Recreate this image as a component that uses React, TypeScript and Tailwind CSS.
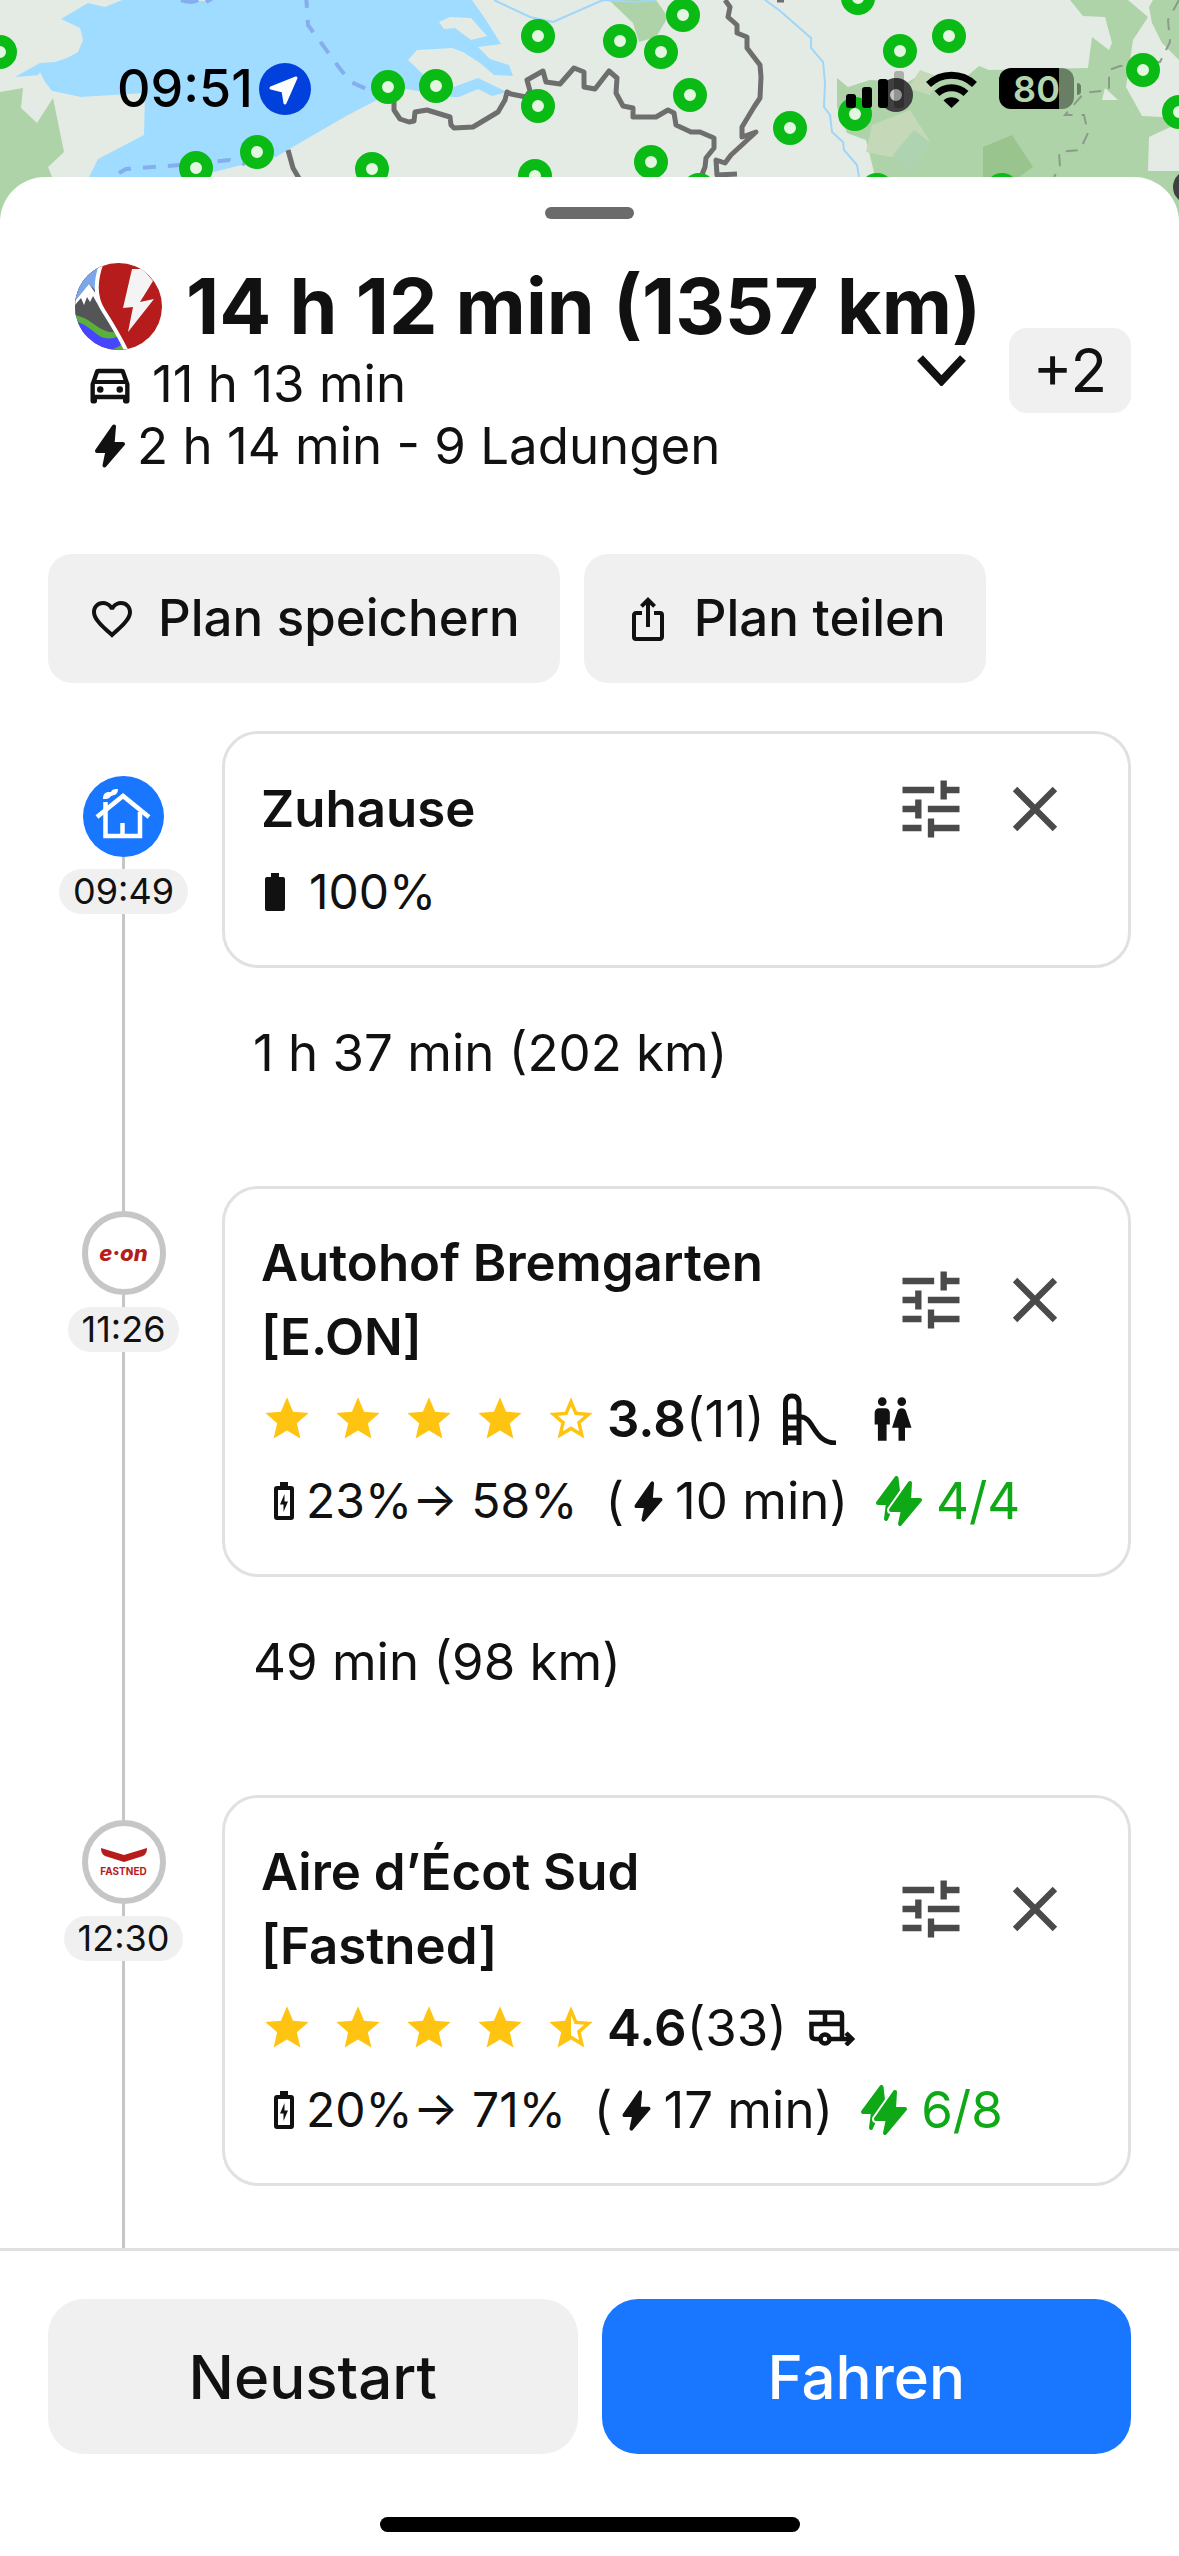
import React from "react";
import {
  MdClose,
  MdFavoriteBorder,
  MdOutlineDirectionsCar,
  MdOutlineIosShare,
  MdStar,
  MdStarBorder,
  MdStarHalf,
  MdTune,
  MdWc,
} from "react-icons/md";

const chargers = [
  [0, 52], [538, 36], [388, 87], [436, 86], [538, 106], [257, 152], [196, 168],
  [372, 169], [535, 176], [620, 41], [683, 15], [661, 52], [690, 95], [858, -2],
  [949, 36], [900, 51], [790, 128], [855, 114], [651, 162], [699, 190],
  [877, 190], [1002, 190], [1143, 70], [1179, 112],
];

const MapBackground = () => (
  <svg
    className="absolute inset-x-0 top-0 h-60 w-full"
    viewBox="0 0 1179 240"
    preserveAspectRatio="xMidYMin slice"
    aria-hidden="true"
  >
    <rect width="1179" height="240" fill="#e4ebe4" />
    {/* Water */}
    <path
      fill="#a0dcff"
      d="M122 0 105 7 88 3 61 19 80 28 83 40 78 52 67 58 55 62 40 63 31 68 15 77 40 75 52 91 80 97 145 93 144 135 98 159 89 177H195L214 172 245 164 276 157 291 148 348 115 377 100 406 89 452 97H459L478 89 492 96 507 92 478 78 454 87 429 80 408 60 417 50 452 48 463 52 480 63 494 75 513 76 509 65 490 59 478 47 501 44 486 20 472 0Z"
    />
    <path
      fill="#e4ebe4"
      d="M439 22 450 17 471 18 487 36 471 40 455 28 444 29ZM40 72 48 89 52 91 80 97 60 98 30 90Z"
    />
    <path fill="#e4ebe4" d="M181 0H212L205 1Z" />
    {/* Woods */}
    <g fill="#aed3a8">
      <path d="M0 92 23 88 21 108 37 123 53 98 64 152 48 167 52 177 60 240H0Z" />
      <path d="M609 0 633 23 639 42 656 37 668 17 656 0Z" />
      <path d="M837 78 848 87 870 80 908 82 920 75 939 77 966 77 979 66 989 70 1088 68 1092 37 1109 50 1112 43 1105 17 1083 16 1070 0H1128L1148 17 1133 40 1126 87 1142 116 1162 117 1179 123 1149 137 1148 171H1179V240H874V172L866 140 847 133 837 107Z" />
      <path d="M1149 7 1153 0H1179V60L1162 43 1152 23Z" />
    </g>
    <path
      fill="#c5d9b8"
      d="M910 110 931 143 891 157 866 152 872 125ZM920 70 939 77 930 95 908 88Z"
    />
    <path fill="#aed3b0" d="M914 130 931 143 912 175 893 155Z" />
    <path fill="#9ac48d" d="M983 147 1012 135 1033 167 1019 177H983Z" />
    <path fill="#e4ebe4" d="M1105 88 1118 100 1102 100Z" />
    {/* Rivers */}
    <g fill="none" stroke="#a0d6f8" strokeWidth="2">
      <path d="M765 0 779 10 811 38V48L823 62 825 83 824 107 830 115 832 132 843 142 844 150 857 165 859 177" />
      <path d="M494 0 530 17 553 22 603 0 637 2 656 0" />
    </g>
    {/* Ferry lines */}
    <g fill="none" stroke="#85aeee" strokeWidth="4">
      <path strokeDasharray="14 12" d="M306 -6 308 25 341 70 351 82 373 92" />
      <path strokeDasharray="13 12" d="M119 173 126 169 180 165 230 160 245 164" />
      <path d="M181 0Q193 4 198 0M206 2 213 -2" />
    </g>
    {/* Borders */}
    <path
      fill="none"
      stroke="#8c9a8a"
      strokeWidth="2"
      strokeDasharray="12 9"
      d="M1179 0 1168 20 1170 42 1160 62 1120 66 1109 70V90L1084 93 1065 115H1084L1088 133 1080 150 1059 152 1060 167 1054 177"
    />
    <g fill="none" stroke="#6e6e6e" strokeWidth="5" strokeLinejoin="round">
      <path d="M394 100V110L400 119 409 122 414 121 415 112 427 110 450 117 451 125 454 128 473 127 498 112 505 100 507 92 511 94 526 97 530 91 527 80 543 71 546 82 560 84 574 68 584 72 584 87 595 89 609 71 617 78 616 93 623 106 633 108V117H656L668 110 674 113 676 125 691 132 700 132 714 138V148L706 158 705 167 701 177" />
      <path d="M725 0 730 7 728 17 737 25 737 33 747 37V48L760 65 761 77 760 98 754 107 742 127V137L756 132 731 155 725 163 716 160 717 175 737 174" />
      <path d="M288 150 293 168 300 180M777 0H784" />
    </g>
    {/* Charging stations */}
    {chargers.map(([x, y]) => (
      <circle
        key={`${x}-${y}`}
        cx={x}
        cy={y}
        r="11.5"
        fill="#e2f6e0"
        stroke="#0bbb15"
        strokeWidth="11"
      />
    ))}
    <circle cx="896" cy="95" r="11.5" fill="#c4c4c4" stroke="#404040" strokeWidth="11" />
    <circle cx="1190" cy="187" r="11.5" fill="#c4c4c4" stroke="#404040" strokeWidth="11" />
  </svg>
);

const StatusBar = () => (
  <div className="relative flex h-[177px] items-center pl-[117px] pr-[98px]">
    <span className="text-[52px] leading-none font-medium text-black">09:51</span>
    <svg className="ml-1.5 size-[52px]" viewBox="0 0 52 52" aria-hidden="true">
      <circle cx="26" cy="26" r="26" fill="#0040dd" />
      <path
        d="M12 25 37 15 26 40 24 28Z"
        fill="#fff"
        stroke="#fff"
        strokeWidth="3"
        strokeLinejoin="round"
      />
    </svg>
    <div className="ml-auto flex items-center gap-[22px]">
      <svg className="h-[38px] w-[58px]" viewBox="0 0 58 38" aria-hidden="true">
        <rect y="24" width="10" height="14" rx="3" />
        <rect x="16" y="17" width="10" height="21" rx="3" />
        <rect x="32" y="9" width="10" height="29" rx="3" />
        <rect x="48" y="1" width="10" height="37" rx="3" opacity="0.25" />
      </svg>
      <svg className="h-[38px] w-[51px]" viewBox="0 0 51 38" aria-hidden="true">
        <g fill="none" stroke="#000" strokeWidth="7">
          <path d="M2.500 14.500A33 33 0 0 1 48.500 14.500" />
          <path d="M11 23.500A21 21 0 0 1 40 23.500" />
        </g>
        <path d="M17.500 30.500A11.500 11.500 0 0 1 33.500 30.500L25.500 38Z" />
      </svg>
      <div className="flex items-center gap-[3px]">
        <div className="flex h-[41px] w-[75px] items-center justify-center rounded-xl bg-linear-to-r from-black from-80% to-black/40 to-80%">
          <span className="text-[36px] leading-none font-semibold text-[#b4d6ae]">80</span>
        </div>
        <div className="h-3 w-1 rounded-r-full bg-black/40" />
      </div>
    </div>
  </div>
);

const AppLogo = () => (
  <svg className="size-[87px] shrink-0" viewBox="0 0 87 87" aria-hidden="true">
    <clipPath id="logo">
      <circle cx="43.500" cy="43.500" r="43.500" />
    </clipPath>
    <g clipPath="url(#logo)">
      <rect width="87" height="87" fill="#b71c1c" />
      <path d="M0 0H28Q16 30 30 50L52 87H0Z" fill="#4646ff" />
      <path d="M0 0H28Q16 30 30 50L44 73Q30 80 18 68 8 60 0 58Z" fill="#5bb03c" />
      <path d="M0 0H28Q16 30 30 46L44 69Q32 71 20 62 10 54 0 52Z" fill="#545557" />
      <path d="M0 0H28Q20 18 23 30L14 21 0 38Z" fill="#7aa7ec" />
      <path d="M0 38 14 21 21 31 23 42 18 33 15 39 12 34 9 42 6 35 0 42Z" fill="#fff" />
      <path d="M33 87Q42 86 48 80L53 87Z" fill="#5bb03c" />
      <path d="M27 -1Q16 28 28 47 44 72 52 89" fill="none" stroke="#fff" strokeWidth="4" />
      <path d="M57 6H68L78 18 65 39 79 36 53 69 58 44 48 45Z" fill="#f4f4f4" />
    </g>
  </svg>
);

const Bolt = ({ className }: { className: string }) => (
  <svg className={className} viewBox="0 0 30 44" aria-hidden="true">
    <path
      d="M19 2.500 17.500 20H28L9.500 41.500 12.500 27H2Z"
      fill="currentColor"
      stroke="currentColor"
      strokeWidth="4"
      strokeLinejoin="round"
    />
  </svg>
);

const DoubleBolt = () => (
  <svg className="h-[50px] w-[46px] shrink-0" viewBox="0 0 46 50" aria-hidden="true">
    <g strokeLinejoin="round" fill="#0fa816">
      <path d="M20.500 2 22 15 10 43 12 27H2Z" stroke="#0fa816" strokeWidth="4" />
      <path d="M34 7 33 24H44L24 48 27 34H15Z" stroke="#fff" strokeWidth="8" />
      <path d="M34 7 33 24H44L24 48 27 34H15Z" stroke="#0fa816" strokeWidth="4" />
    </g>
  </svg>
);

const BatteryFull = () => (
  <svg className="ml-1 h-[38px] w-5" viewBox="0 0 20 38" aria-hidden="true">
    <path d="M6 0H14V4H18Q20 4 20 6V36Q20 38 18 38H2Q0 38 0 36V6Q0 4 2 4H6Z" fill="#111" />
  </svg>
);

const BatteryCharging = () => (
  <svg className="h-[38px] w-5 shrink-0" viewBox="0 0 20 38" aria-hidden="true">
    <path d="M6 0H14V5H6Z" fill="#111" />
    <rect x="2" y="6" width="16" height="30" rx="1" fill="none" stroke="#111" strokeWidth="4" />
    <path d="M10.500 12V19.500H14L9.500 30V22.500H6Z" fill="#111" />
  </svg>
);

const HomeBadge = () => (
  <svg className="size-[81px]" viewBox="0 0 81 81" aria-hidden="true">
    <circle cx="40.500" cy="40.500" r="40.500" fill="#1976ff" />
    <g fill="none" stroke="#fff" strokeWidth="4.500">
      <path d="M14 41 40 20 66 41" />
      <path d="M22.500 36V60H57V36M22.500 26V37M39.500 60V47" />
    </g>
    <path d="M20 23C20 16 24 16 28 16 29 13 32 13 35 13 35 19 31 19 28 20 26 23 24 23 20 23Z" fill="#fff" />
  </svg>
);

const EonBadge = () => (
  <div className="flex size-[84px] items-center justify-center rounded-full border-6 border-[#c6c6c6] bg-white">
    <span className="text-[22px] leading-none font-extrabold text-[#b71c1c] italic">e·on</span>
  </div>
);

const FastnedBadge = () => (
  <div className="flex size-[84px] flex-col items-center justify-center gap-1 rounded-full border-6 border-[#c6c6c6] bg-white">
    <svg className="h-3.5 w-[46px]" viewBox="0 0 46 14" aria-hidden="true">
      <path d="M0 0 23 7 46 0Q46 6 42 8L23 14 4 8Q0 6 0 0Z" fill="#b71c1c" />
    </svg>
    <span className="text-[10px] leading-none font-bold text-[#b71c1c]">FASTNED</span>
  </div>
);

const Slide = () => (
  <svg className="h-[52px] w-[53px]" viewBox="0 0 53 52" aria-hidden="true">
    <g fill="none" stroke="#111" strokeWidth="5">
      <path d="M2.500 52V10Q2.500 3 9 3T16 10V52" />
      <path d="M3 24H18C31 24 30 50 53 50M3 35H16M3 45H16" />
    </g>
  </svg>
);

const Caravan = () => (
  <svg className="h-9 w-[46px]" viewBox="0 0 46 36" aria-hidden="true">
    <g fill="none" stroke="#111" strokeWidth="4.500">
      <path d="M0 2.500H30Q33 2.500 33 5V28M16 2V13M33 14H2.500V25Q2.500 29 6 29H11M21 29H42" />
      <circle cx="16" cy="29" r="4.500" />
      <path d="M37 23 43 29 37 35" />
    </g>
  </svg>
);

const stops = [
  { name: "Zuhause", time: "09:49", badge: <HomeBadge />, battery: "100%", leg: "1 h 37 min (202 km)" },
  {
    name: "Autohof Bremgarten [E.ON]",
    time: "11:26",
    badge: <EonBadge />,
    rating: "3.8",
    reviews: "(11)",
    lastStar: MdStarBorder,
    amenities: (
      <div className="ml-[18px] flex items-center gap-[30px]">
        <Slide />
        <MdWc className="size-[52px]" />
      </div>
    ),
    from: "23%",
    to: "58%",
    duration: "10 min)",
    free: "4/4",
    leg: "49 min (98 km)",
  },
  {
    name: "Aire d’Écot Sud [Fastned]",
    time: "12:30",
    badge: <FastnedBadge />,
    rating: "4.6",
    reviews: "(33)",
    lastStar: MdStarHalf,
    amenities: (
      <div className="ml-[22px]">
        <Caravan />
      </div>
    ),
    from: "20%",
    to: "71%",
    duration: "17 min)",
    free: "6/8",
    leg: "",
  },
];

const Stop = ({ stop, first }: { stop: (typeof stops)[number]; first: boolean }) => (
  <li className="flex shrink-0">
    {/* Time rail */}
    <div className="mr-[23px] flex w-[151px] shrink-0 flex-col items-center">
      {first ? <div className="h-[45px]" /> : <div className="h-[25px] w-[3px] bg-[#c6c6c6]" />}
      {stop.badge}
      <div className="h-3 w-[3px] bg-[#c6c6c6]" />
      <time className="rounded-full bg-[#f0f0f0] px-3.5 text-[36px] leading-[45px]">{stop.time}</time>
      <div className="w-[3px] flex-1 bg-[#c6c6c6]" />
    </div>
    {/* Stop card */}
    <div className="min-w-0 flex-1">
      <article className="flex flex-col gap-2 rounded-[36px] border-3 border-[#e1e1e1] pt-[37px] pr-[55px] pb-9 pl-9">
        <div className="flex items-center">
          <h2 className="max-w-[530px] flex-1 text-[51px] leading-[74px] font-semibold">{stop.name}</h2>
          <div className="ml-auto flex gap-7 text-[#4a4a4a]">
            <button type="button" aria-label="Optionen">
              <MdTune className="size-[76px]" />
            </button>
            <button type="button" aria-label="Entfernen">
              <MdClose className="size-[76px]" />
            </button>
          </div>
        </div>
        {stop.battery && (
          <div className="flex items-center gap-6 text-[48px] leading-[74px]">
            <BatteryFull />
            <span>{stop.battery}</span>
          </div>
        )}
        {stop.lastStar && (
          <div className="flex items-center text-[51px] leading-[74px] whitespace-nowrap">
            <div className="flex gap-[19px] text-[#ffc412]">
              <MdStar className="size-[52px]" />
              <MdStar className="size-[52px]" />
              <MdStar className="size-[52px]" />
              <MdStar className="size-[52px]" />
              <stop.lastStar className="size-[52px]" />
            </div>
            <b className="ml-2.5 font-semibold">{stop.rating}</b>
            <span>{stop.reviews}</span>
            {stop.amenities}
          </div>
        )}
        {stop.free && (
          <div className="flex items-center pl-[13px] text-[51px] leading-[74px] whitespace-nowrap">
            <BatteryCharging />
            <span className="ml-3 text-[48px]">{stop.from}→ {stop.to}</span>
            <span className="ml-7">(</span>
            <Bolt className="ml-2.5 h-[41px] w-[29px]" />
            <span className="ml-3">{stop.duration}</span>
            <div className="ml-7 flex items-center gap-3.5 text-[#0fa816]">
              <DoubleBolt />
              <span>{stop.free}</span>
            </div>
          </div>
        )}
      </article>
      <p className="h-[218px] pt-12 pl-[31px] text-[51px] leading-[74px]">{stop.leg}</p>
    </div>
  </li>
);

const App = () => {
  return (
    <main className="relative flex h-screen flex-col overflow-hidden bg-white font-['Inter',sans-serif] text-[#111]">
      <MapBackground />
      <StatusBar />
      <section className="relative flex min-h-0 flex-1 flex-col rounded-t-[45px] bg-white">
        <div className="mt-[30px] h-3 w-[89px] self-center rounded-full bg-[#6b6b6b]" />

        {/* Trip summary */}
        <header className="mt-11 flex items-center pr-12 pl-[75px]">
          <div className="min-w-0 flex-1 whitespace-nowrap">
            <div className="flex items-center gap-6 pb-[3px]">
              <AppLogo />
              <h1 className="text-[77px] leading-[87px] font-bold">14 h 12 min (1357 km)</h1>
            </div>
            <p className="flex items-center gap-4 pl-[9px] text-[51px] leading-[62px]">
              <MdOutlineDirectionsCar className="size-[52px]" />
              11 h 13 min
            </p>
            <p className="flex items-center gap-3 pl-5 text-[51px] leading-[62px]">
              <Bolt className="h-11 w-[30px]" />
              2 h 14 min - 9 Ladungen
            </p>
          </div>
          <button type="button" aria-label="Details" className="mr-[43px]">
            <svg className="h-[31px] w-[49px]" viewBox="0 0 49 31" aria-hidden="true">
              <path d="M3 3 24.500 26 46 3" fill="none" stroke="#111" strokeWidth="8" />
            </svg>
          </button>
          <button type="button" className="h-[85px] w-[122px] rounded-[18px] bg-[#f0f0f0] text-[60px] leading-none">
            +2
          </button>
        </header>

        <div className="mt-[77px] flex gap-6 px-12 text-[51px] font-medium whitespace-nowrap">
          <button type="button" className="flex h-[129px] items-center gap-[22px] rounded-3xl bg-[#f0f0f0] px-10">
            <MdFavoriteBorder className="size-12" />
            Plan speichern
          </button>
          <button type="button" className="flex h-[129px] items-center gap-[22px] rounded-3xl bg-[#f0f0f0] px-10">
            <MdOutlineIosShare className="size-12" />
            Plan teilen
          </button>
        </div>

        <ol className="mt-12 flex min-h-0 flex-1 flex-col overflow-hidden px-12">
          {stops.map((stop, i) => (
            <Stop key={stop.time} stop={stop} first={i === 0} />
          ))}
        </ol>

        {/* Bottom actions */}
        <footer className="border-t-3 border-[#e1e1e1] bg-white px-12 pt-12 pb-6">
          <div className="grid grid-cols-2 gap-6 text-[60px] font-medium">
            <button type="button" className="h-[155px] rounded-[36px] bg-[#f0f0f0]">
              Neustart
            </button>
            <button type="button" className="h-[155px] rounded-[36px] bg-[#1976ff] text-white">
              Fahren
            </button>
          </div>
          <div className="mx-auto mt-[63px] h-[15px] w-[420px] rounded-full bg-black" />
        </footer>
      </section>
    </main>
  );
};

export default App;
